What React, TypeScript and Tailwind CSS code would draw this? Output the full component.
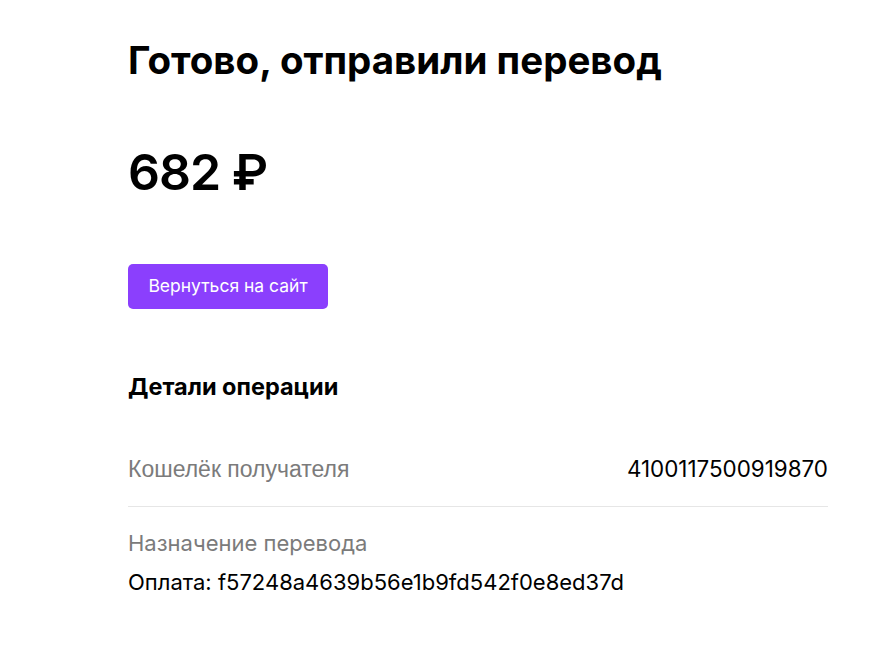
import React from "react";

const PaymentDonePage: React.FC = () => {
  const amount = 682;
  const wallet = "4100117500919870";
  const purpose = "Оплата: f57248a4639b56e1b9fd542f0e8ed37d";

  return (
    <div className="min-h-screen bg-white font-['Inter',sans-serif] text-black">
      <div className="ml-[128px] w-[700px] pt-[36px]">
        {/* Title */}
        <h1 className="text-[38.5px] font-bold leading-[48px]">
          Готово, отправили перевод
        </h1>

        {/* Amount */}
        <div className="mt-[56px] text-[50px] font-semibold leading-[64px] tracking-[-1px]">
          {amount} ₽
        </div>

        {/* Back button */}
        <button className="mt-[60px] flex h-[45px] w-[200px] items-center justify-center rounded-[5px] bg-[#8b3ffd] text-[17.5px] text-white">
          Вернуться на сайт
        </button>

        {/* Details */}
        <h2 className="mt-[64px] text-[23.5px] font-bold leading-[28px]">
          Детали операции
        </h2>

        <div className="mt-[53px] flex items-center justify-between border-b border-[#e6e6e6] pb-[22px] leading-[30px]">
          <span className="font-['Liberation_Sans',sans-serif] text-[23px] text-[#7b7b7b]">
            Кошелёк получателя
          </span>
          <span className="text-[22.4px]">{wallet}</span>
        </div>

        <div className="pt-[21px] text-[22px] leading-[30px]">
          <div className="text-[#7b7b7b]">Назначение перевода</div>
          <div className="mt-[9px]">{purpose}</div>
        </div>
      </div>
    </div>
  );
};

export default PaymentDonePage;
